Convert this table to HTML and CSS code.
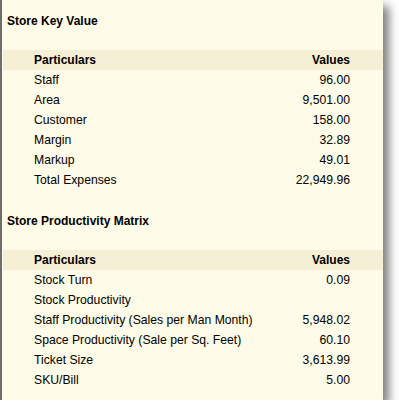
FILE: index.html
```html
<!DOCTYPE html>
<html>
<head>
<meta charset="utf-8">
<link rel="stylesheet" href="styles.css">
</head>
<body>
<div class="panel">
  <section class="section">
    <h2 class="title">Store Key Value</h2>
    <div class="table">
      <div class="row head"><span>Particulars</span><span>Values</span></div>
      <div class="row"><span>Staff</span><span>96.00</span></div>
      <div class="row"><span>Area</span><span>9,501.00</span></div>
      <div class="row"><span>Customer</span><span>158.00</span></div>
      <div class="row"><span>Margin</span><span>32.89</span></div>
      <div class="row"><span>Markup</span><span>49.01</span></div>
      <div class="row"><span>Total Expenses</span><span>22,949.96</span></div>
    </div>
  </section>
  <section class="section">
    <h2 class="title">Store Productivity Matrix</h2>
    <div class="table">
      <div class="row head"><span>Particulars</span><span>Values</span></div>
      <div class="row"><span>Stock Turn</span><span>0.09</span></div>
      <div class="row"><span>Stock Productivity</span><span></span></div>
      <div class="row"><span>Staff Productivity (Sales per Man Month)</span><span>5,948.02</span></div>
      <div class="row"><span>Space Productivity (Sale per Sq. Feet)</span><span>60.10</span></div>
      <div class="row"><span>Ticket Size</span><span>3,613.99</span></div>
      <div class="row"><span>SKU/Bill</span><span>5.00</span></div>
    </div>
  </section>
</div>
</body>
</html>
```

FILE: styles.css
```css
html, body {
  margin: 0;
  padding: 0;
  background: #ffffff;
}
body {
  font-family: "Liberation Sans", Arial, sans-serif;
  font-size: 12.2px;
  color: #000000;
}
.panel {
  width: 381px;
  height: 390px;
  padding-top: 10px;
  background: #fefbe8;
  border-left: 2px solid #6e6e6e;
  box-shadow: 6px 6px 9px rgba(0, 0, 0, 0.5);
}
.section + .section {
  margin-top: 21px;
}
.title {
  margin: 0 0 19px 0;
  padding: 1px 0 0 5px;
  font-size: 12px;
  font-weight: bold;
  line-height: 20px;
}
.section + .section .title {
  padding-top: 0;
}
.table {
  margin-left: 1px;
  display: flex;
  flex-direction: column;
}
.row {
  display: flex;
  justify-content: space-between;
  height: 20px;
  line-height: 21px;
  padding: 0 33px 0 31px;
}
.row.head {
  background: #f5efd6;
  font-weight: bold;
  font-size: 12px;
}
```
